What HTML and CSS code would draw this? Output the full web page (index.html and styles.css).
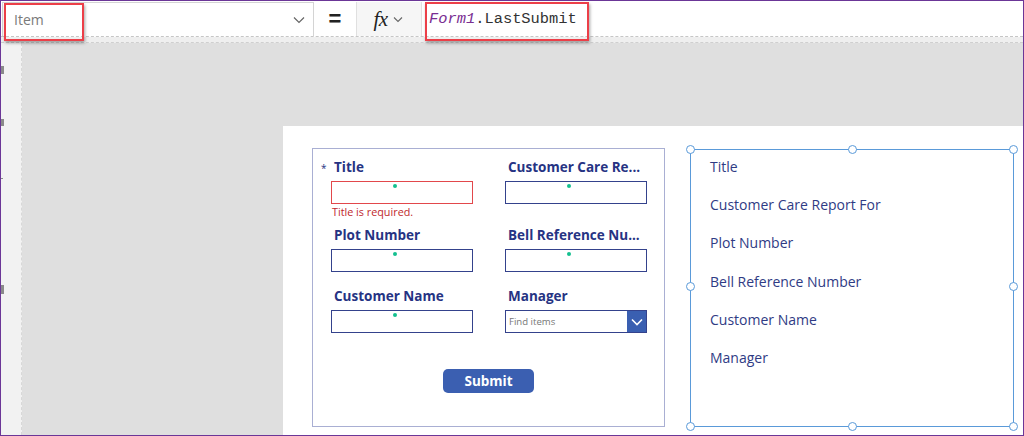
FILE: index.html
```html
<!DOCTYPE html>
<html>
<head>
<meta charset="utf-8">
<link rel="stylesheet" href="styles.css">
</head>
<body>
<div class="app">
  <div class="topbar">
    <div class="prop">
      <span class="prop-text">Item</span>
      <svg class="prop-chev" width="12" height="8" viewBox="0 0 12 8"><path d="M1 1.5 L6 6.5 L11 1.5" fill="none" stroke="#666" stroke-width="1.2"/></svg>
      <div class="hl hl-item"></div>
    </div>
    <div class="eq">=</div>
    <div class="fx"><span class="fx-text">fx</span><svg width="10" height="7" viewBox="0 0 10 7"><path d="M1 1.5 L5 5.5 L9 1.5" fill="none" stroke="#666" stroke-width="1.1"/></svg></div>
    <div class="formula"><span class="f-ident">Form1</span>.LastSubmit<div class="hl hl-formula"></div></div>
  </div>
  <div class="strip"></div>
  <div class="main">
    <div class="leftpanel">
      <span class="lp-ic lp1"></span>
      <span class="lp-ic lp2"></span>
      <span class="lp-ic lp3"></span>
      <span class="lp-ic lp4"></span>
    </div>
    <div class="canvas">
      <div class="screen">
        <div class="form">
          <div class="grid">
            <div class="card c1">
              <div class="label"><span class="req">*</span>Title</div>
              <div class="input err"><span class="dot"></span></div>
              <div class="errmsg">Title is required.</div>
            </div>
            <div class="card c1">
              <div class="label">Customer Care Re...</div>
              <div class="input"><span class="dot"></span></div>
            </div>
            <div class="card c2">
              <div class="label">Plot Number</div>
              <div class="input"><span class="dot"></span></div>
            </div>
            <div class="card c2">
              <div class="label">Bell Reference Nu...</div>
              <div class="input"><span class="dot"></span></div>
            </div>
            <div class="card c3">
              <div class="label">Customer Name</div>
              <div class="input"><span class="dot"></span></div>
            </div>
            <div class="card c3">
              <div class="label">Manager</div>
              <div class="input combo"><span class="find">Find items</span><span class="combo-btn"><svg width="12" height="8" viewBox="0 0 12 8"><path d="M1 1.5 L6 6.5 L11 1.5" fill="none" stroke="#fff" stroke-width="1.6"/></svg></span></div>
            </div>
          </div>
          <div class="submit-row"><button class="submit">Submit</button></div>
        </div>
        <div class="display">
          <div class="d-item">Title</div>
          <div class="d-item">Customer Care Report For</div>
          <div class="d-item">Plot Number</div>
          <div class="d-item">Bell Reference Number</div>
          <div class="d-item">Customer Name</div>
          <div class="d-item">Manager</div>
          <span class="h h-tl"></span><span class="h h-tm"></span><span class="h h-tr"></span>
          <span class="h h-ml"></span><span class="h h-mr"></span>
          <span class="h h-bl"></span><span class="h h-bm"></span><span class="h h-br"></span>
        </div>
      </div>
    </div>
  </div>
</div>
</body>
</html>
```
FILE: styles.css
```css
* { box-sizing: border-box; }
html, body { margin: 0; padding: 0; }
body { width: 1024px; height: 436px; overflow: hidden; font-family: "Open Sans", "Noto Sans", sans-serif; }

.app {
  width: 1024px; height: 436px;
  border: 1px solid #6b3697;
  display: flex; flex-direction: column;
  background: #fff;
}

.topbar {
  height: 36px; flex: none;
  display: flex; align-items: stretch;
  border-bottom: 1px dashed #c6c6c6;
  background: #fff;
  padding-top: 1px;
}
.prop {
  position: relative;
  width: 312px; margin-left: 1px;
  border: 1px solid #d4d4d4; border-bottom: none;
  display: flex; align-items: center; justify-content: space-between;
  padding: 0 8px 0 11px;
}
.prop-text { color: #7a7a7a; font-size: 14px; font-family: "Open Sans", sans-serif; }
.prop-chev { margin-top: 1px; }
.hl {
  position: absolute;
  border: 2px solid #ec3f48;
  box-shadow: 1px 2px 3px rgba(0,0,0,0.35);
}
.hl-item { left: 1px; top: 0px; width: 80px; height: 38px; }
.eq { width: 42px; text-align: center; font-size: 22px; font-weight: 600; color: #222; line-height: 34px; font-family: "Liberation Sans", sans-serif; }
.fx {
  width: 66px; background: #f6f6f6;
  border-left: 1px solid #e0e0e0; border-right: 1px solid #e0e0e0;
  display: flex; align-items: center; justify-content: center; gap: 5px;
  padding-right: 2px;
}
.fx-text { font-family: "Liberation Serif", serif; font-style: italic; font-size: 21px; color: #222; letter-spacing: -0.5px; }
.formula {
  position: relative;
  margin-left: 6px;
  font-family: "Liberation Mono", "DejaVu Sans Mono", monospace;
  font-size: 15.4px; color: #333;
  line-height: 34px; padding-left: 1px;
}
.f-ident { color: #7a2e92; font-style: italic; }
.hl-formula { left: -3px; top: 0px; width: 164px; height: 39px; }

.strip {
  height: 6px; flex: none;
  background: #efefef;
  border-bottom: 1px dashed #cfcfcf;
}

.main { flex: 1; display: flex; min-height: 0; }
.leftpanel {
  width: 21px; flex: none; background: #f2f2f2;
  display: flex; flex-direction: column;
  border-right: 1px dashed #d8d8d8;
}
.lp-ic { display: block; background: #8a8a8a; }
.lp1 { width: 3px; height: 8px; margin-top: 23px; }
.lp2 { width: 3px; height: 7px; margin-top: 45px; }
.lp3 { width: 2px; height: 1px; margin-top: 52px; }
.lp4 { width: 3px; height: 9px; margin-top: 106px; }

.canvas {
  flex: 1; background: #dfdfdf;
  padding: 83px 0 0 261px;
  display: flex; min-height: 0;
}
.screen {
  flex: 1; background: #fff;
  display: flex; align-items: flex-start;
  padding: 22px 0 0 29px;
}

.form {
  width: 353px; height: 279px;
  border: 1px solid #a9afd3;
  padding: 9px 0 0 18px;
  display: flex; flex-direction: column;
}
.grid {
  display: grid;
  grid-template-columns: 174px 160px;
  grid-template-rows: 68px 61px 62px;
}
.card { position: relative; display: flex; flex-direction: column; }
.label {
  font-weight: 700; font-size: 13.5px; color: #263383;
  height: 18px; line-height: 18px; padding-left: 3px;
  white-space: nowrap;
  position: relative;
}
.req { position: absolute; left: -10px; top: 1px; font-size: 10px; font-weight: 400; color: #263383; }
.input {
  margin-top: 5px;
  width: 142px; height: 23px;
  border: 1px solid #34428c;
  position: relative;
}
.input.err { border-color: #e2474b; }
.dot {
  position: absolute; left: 61px; top: 2px;
  width: 4px; height: 4px; border-radius: 50%;
  background: #14c08f;
}
.errmsg { color: #c0282d; font-size: 10.8px; margin-top: 1px; padding-left: 1px; line-height: 14px; }
.combo { display: flex; justify-content: space-between; align-items: stretch; }
.find { font-size: 9.6px; color: #777; line-height: 21px; padding-left: 3px; }
.combo-btn { width: 19px; background: #3a5fb1; display: flex; align-items: center; justify-content: center; }

.submit-row { display: flex; justify-content: center; padding-right: 18px; margin-top: 20px; }
.submit {
  width: 91px; height: 24px;
  background: #3b5fb1; color: #fff;
  border: none; border-radius: 5px;
  font-family: "Open Sans", sans-serif; font-weight: 700; font-size: 13.5px;
  padding: 0;
}

.display {
  position: relative;
  margin-left: 25px; margin-top: 1px;
  width: 324px; height: 278px;
  border: 1px solid #5a9ad9;
  padding: 7px 0 0 19px;
  display: flex; flex-direction: column;
}
.d-item {
  font-size: 14px; color: #2f3b84;
  height: 38.2px; line-height: 19px;
}
.h {
  position: absolute; width: 9px; height: 9px;
  border-radius: 50%; border: 1px solid #5a9ad9; background: #fff;
}
.h-tl { left: -5px; top: -5px; }
.h-tm { left: 157px; top: -5px; }
.h-tr { right: -5px; top: -5px; }
.h-ml { left: -5px; top: 132px; }
.h-mr { right: -5px; top: 132px; }
.h-bl { left: -5px; bottom: -5px; }
.h-bm { left: 157px; bottom: -5px; }
.h-br { right: -5px; bottom: -5px; }
```
